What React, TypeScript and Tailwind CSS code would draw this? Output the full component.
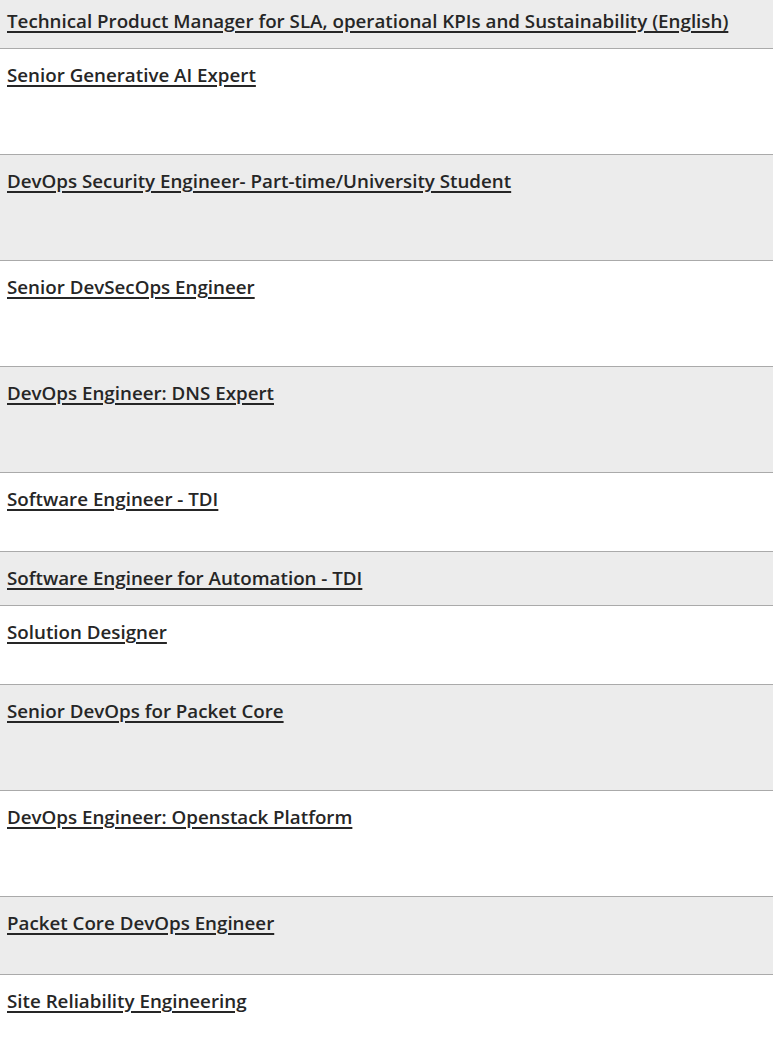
import React from 'react';

type Job = { title: string; h: string };

// row heights include the 1px bottom border
const jobs: Job[] = [
  { title: 'Technical Product Manager for SLA, operational KPIs and Sustainability (English)', h: 'h-[49px] pt-[10px]' },
  { title: 'Senior Generative AI Expert', h: 'h-[106px] pt-[15px]' },
  { title: 'DevOps Security Engineer- Part-time/University Student', h: 'h-[106px] pt-[15px]' },
  { title: 'Senior DevSecOps Engineer', h: 'h-[106px] pt-[15px]' },
  { title: 'DevOps Engineer: DNS Expert', h: 'h-[106px] pt-[15px]' },
  { title: 'Software Engineer - TDI', h: 'h-[79px] pt-[15px]' },
  { title: 'Software Engineer for Automation - TDI', h: 'h-[54px] pt-[15px]' },
  { title: 'Solution Designer', h: 'h-[79px] pt-[15px]' },
  { title: 'Senior DevOps for Packet Core', h: 'h-[106px] pt-[15px]' },
  { title: 'DevOps Engineer: Openstack Platform', h: 'h-[106px] pt-[15px]' },
  { title: 'Packet Core DevOps Engineer', h: 'h-[78px] pt-[15px]' },
  { title: 'Site Reliability Engineering', h: 'h-[106px] pt-[15px]' },
];

export default function App() {
  return (
    <div className="min-h-screen bg-white" style={{ fontFamily: '"Open Sans", "Noto Sans", sans-serif' }}>
      <ul className="w-full">
        {jobs.map((job, i) => (
          <li
            key={job.title}
            className={`${job.h} px-[7px] border-b border-[#aaaaaa] ${i % 2 === 0 ? 'bg-[#ececec]' : 'bg-white'}`}
          >
            <a
              href="#"
              className="text-[18.75px] leading-5 font-semibold text-[#262626] underline decoration-2 underline-offset-[3px] whitespace-nowrap"
            >
              {job.title}
            </a>
          </li>
        ))}
      </ul>
    </div>
  );
}
